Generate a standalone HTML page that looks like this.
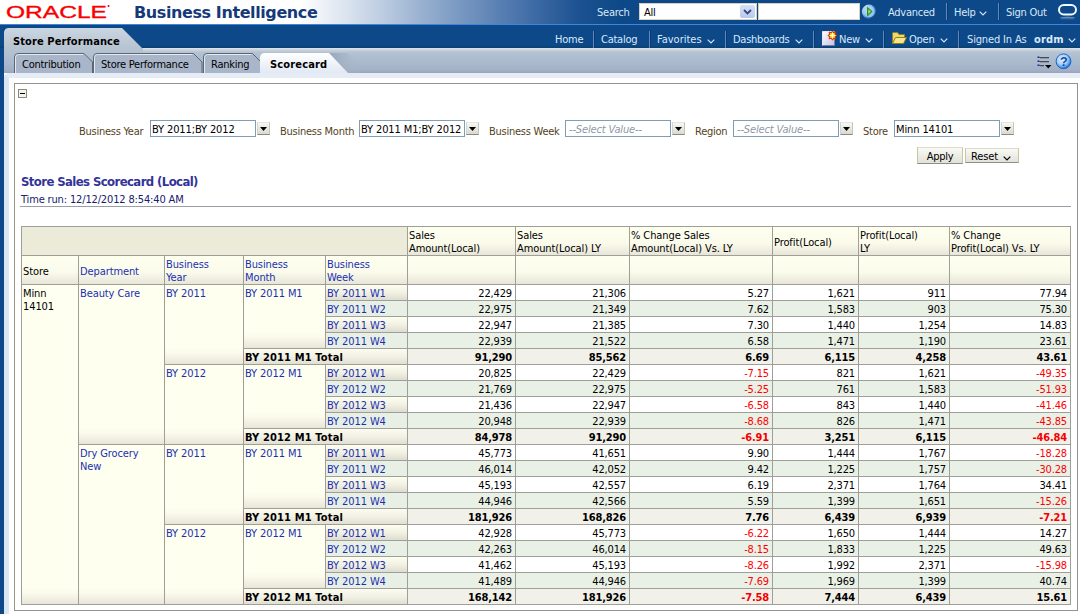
<!DOCTYPE html>
<html>
<head>
<meta charset="utf-8">
<title>Store Performance - Scorecard</title>
<style>
html,body{margin:0;padding:0}
body{width:1080px;height:614px;overflow:hidden;position:relative;background:#fff;font-family:"DejaVu Sans Condensed","Liberation Sans",sans-serif;font-size:11px;color:#000;line-height:13px}
.abs{position:absolute}
.t{position:absolute;white-space:nowrap;line-height:13px;letter-spacing:-0.25px;margin-top:1px}
#top{left:0;top:0;width:1080px;height:24px;background:linear-gradient(to right,#fff 0,#fff 300px,#d0dbea 360px,#89a5c9 440px,#4973ab 520px,#1b5190 580px,#0d4988 620px,#0d4988 100%)}
#line1{left:0;top:24px;width:1080px;height:1px;background:#3f86dc}
#bar2{left:0;top:25px;width:1080px;height:23px;background:#0d4988}
#tabrow{left:0;top:48px;width:1080px;height:25px;background:linear-gradient(to bottom,#dfe5ec 0,#d3dbe4 1px,#b5c4d3 4px,#afbfd1 8px,#a9b8cc 16px,#a3b0c6 22px,#98a4ba 25px)}
#lstrip{left:0;top:48px;width:4px;height:566px;background:#0d4988}
#content{left:4px;top:73px;width:1071px;height:536px;background:#fff;border-top-left-radius:5px;border-left:5px solid #dce6f3;border-top:5px solid #e6ecf5}
#panel{left:14px;top:83px;width:1062px;height:526px;border:1px solid #94948c;background:#fff}
.hl{color:#d9e8fa;margin-top:0 !important}
.sep{position:absolute;width:1px;height:17px;background:#5f88bb;box-shadow:1px 0 0 #0a3a70}
.chev{position:absolute;width:8px;height:5px}
/* prompts */
.pl{color:#544220}
.inp{position:absolute;top:120px;height:15px;width:104px;border:1px solid #7f9db9;background:#fff}
.inp span{position:absolute;left:1px;top:2px;white-space:nowrap;letter-spacing:-0.12px}
.inp i{position:absolute;left:3px;top:2px;white-space:nowrap;color:#8c99a8;letter-spacing:-0.15px}
.dd{position:absolute;top:122px;width:11px;height:11px;background:linear-gradient(#f7f7f3,#dadad2);border:1px solid;border-color:#e6e6e0 #c4c4bc #8a8a84 #d4d4cc}
.dd:after{content:"";position:absolute;left:2px;top:4px;width:7px;height:4px;background:#000;clip-path:polygon(0 0,100% 0,50% 100%)}
.btn{position:absolute;top:148px;height:13px;background:linear-gradient(#f9f9f5,#e2e2da);border:1px solid;border-color:#dcdcc8 #c9c6a0 #8e8e86 #c9c6a0;text-align:center;font-size:11px;line-height:13px;letter-spacing:-0.25px}
.btn span{position:relative;top:1px}
/* table */
#pv{position:absolute;left:21px;top:226px;border-collapse:separate;border-spacing:0;table-layout:fixed;width:1050px;border-right:1px solid #9ea098;border-bottom:1px solid #9ea098;letter-spacing:-0.1px}
#pv td{border-left:1px solid #9ea098;border-top:1px solid #9ea098;padding:0 2px 0 1px;line-height:13px;height:15px;vertical-align:top;overflow:hidden;white-space:nowrap;box-sizing:border-box}
#pv tr.h1 td,#pv tr.h2 td{height:29px;vertical-align:middle;padding:2px 2px 0 1px}
#pv td.blank{background:#ecebd9}
#pv td.ch{background:linear-gradient(to bottom,#fffff0 0,#fbfbec 16px,#e7e6d8 100%)}
#pv td.rh{background:linear-gradient(to top,#e7e6d9 0,#f2f1e4 6px,#fbfbee 12px,#fffff0 16px);color:#1a30b0;padding-top:2px}
#pv td.lk{color:#1a30b0}
#pv td.blk{color:#000}
#pv td.wk{background:linear-gradient(to bottom,#fdfdf0 0,#f1f0e3 8px,#dddcd0 100%);color:#1a30b0;height:16px;padding-top:2px}
#pv td.wk.alt{background:#e8f0e6}
#pv td.d{text-align:right;background:#fff;height:16px;padding-top:2px;padding-right:3px;letter-spacing:-0.15px}
#pv td.d.alt{background:#e9f1e7}
#pv td.tot{background:#f2f1e9;font-weight:bold;height:16px;padding-top:2px}
#pv td.tl{letter-spacing:0.15px;background:linear-gradient(to bottom,#fcfcf1 0,#f1f0e4 8px,#e0dfd2 100%)}
#pv td.neg{color:#ff0000}
#pv td.tot.neg{color:#f40000}
</style>
</head>
<body>
<div class="abs" id="top"></div>
<div class="abs" id="line1"></div>
<div class="abs" id="bar2"></div>
<div class="abs" style="left:0;top:45px;width:1080px;height:3px;background:linear-gradient(#0d4988,#09406f)"></div>
<div class="abs" id="tabrow"></div>
<div class="abs" id="lstrip"></div>
<div class="abs" id="content"></div>

<!-- ORACLE logo -->
<svg class="abs" style="left:0;top:0" width="130" height="24" viewBox="0 0 130 24"><text x="6" y="17.700" font-family="Liberation Sans, sans-serif" font-weight="normal" font-size="17.300" fill="#f80000" stroke="#f80000" stroke-width="0.350" textLength="101" lengthAdjust="spacingAndGlyphs">ORACLE</text><circle cx="108.5" cy="6" r="1" fill="#f80000"/></svg>
<div class="t" style="left:134px;top:1px;font-family:'DejaVu Sans','Liberation Sans',sans-serif;font-size:16px;font-weight:bold;line-height:22px;color:#15397a;letter-spacing:-0.4px">Business Intelligence</div>

<!-- search row -->
<div class="t hl" style="left:597px;top:6px">Search</div>
<div class="abs" style="left:639px;top:3px;width:116px;height:15px;background:#fff;border:1px solid #d6d2c2"></div>
<div class="t" style="left:644px;top:5px">All</div>
<div class="abs" style="left:740px;top:5px;width:15px;height:13px;background:linear-gradient(#d6e0f8,#b9c8ee);border-radius:2px"></div>
<svg class="abs" style="left:743px;top:9px" width="9" height="6" viewBox="0 0 9 6"><path d="M1 1 L4.5 4.5 L8 1" fill="none" stroke="#3a4a78" stroke-width="1.8"/></svg>
<div class="abs" style="left:758px;top:3px;width:100px;height:15px;background:#fff;border:1px solid #d6d2c2"></div>
<svg class="abs" style="left:861px;top:4px" width="16" height="16" viewBox="0 0 16 16"><defs><radialGradient id="gb" cx=".4" cy=".35" r=".7"><stop offset="0" stop-color="#b8e0fc"/><stop offset="1" stop-color="#78bcf4"/></radialGradient><linearGradient id="gs" x1="0" y1="0" x2="1" y2="1"><stop offset="0" stop-color="#e8f6ff"/><stop offset=".5" stop-color="#5a9ce0"/><stop offset="1" stop-color="#08287c"/></linearGradient></defs><circle cx="8" cy="7.700" r="6.500" fill="url(#gb)" stroke="url(#gs)" stroke-width="1.300"/><path d="M6.500 3.400 L11.200 7.600 L6.500 11.800 Z" fill="#5cb424" stroke="#34820e" stroke-width=".9" stroke-linejoin="round"/><path d="M7.500 5.900 L9.400 7.600 L7.500 9.300 Z" fill="#b4e494"/></svg>
<div class="t hl" style="left:888px;top:6px">Advanced</div>
<div class="sep" style="left:946px;top:3px"></div>
<div class="t hl" style="left:954px;top:6px">Help</div>
<svg class="chev" style="left:979px;top:11px" viewBox="0 0 8 5"><path d="M.7 .7 L4 4 L7.3 .7" fill="none" stroke="#d9e8fa" stroke-width="1.15"/></svg>
<div class="sep" style="left:998px;top:3px"></div>
<div class="t hl" style="left:1006px;top:6px">Sign Out</div>
<svg class="abs" style="left:1056px;top:2px" width="24" height="22" viewBox="0 0 24 22"><defs><linearGradient id="rf" x1="0" y1="0" x2="0" y2="1"><stop offset="0" stop-color="#9db9dc" stop-opacity=".9"/><stop offset="1" stop-color="#3b6ba8" stop-opacity="0"/></linearGradient></defs><rect x="3" y="3" width="17" height="9.500" rx="4.750" ry="4.750" fill="none" stroke="#f2f7fd" stroke-width="2"/><path d="M4 15.500 Q11.500 13.800 19 15.500 L17 18.500 Q11.500 17.500 6 18.500 Z" fill="url(#rf)"/></svg>

<!-- menu row -->
<div class="t hl" style="left:555px;top:33px">Home</div>
<div class="sep" style="left:593px;top:31px"></div>
<div class="t hl" style="left:601px;top:33px">Catalog</div>
<div class="sep" style="left:649px;top:31px"></div>
<div class="t hl" style="left:657px;top:33px;letter-spacing:0">Favorites</div>
<svg class="chev" style="left:707px;top:38.5px" viewBox="0 0 8 5"><path d="M.7 .7 L4 4 L7.3 .7" fill="none" stroke="#d9e8fa" stroke-width="1.15"/></svg>
<div class="sep" style="left:725px;top:31px"></div>
<div class="t hl" style="left:733px;top:33px">Dashboards</div>
<svg class="chev" style="left:795px;top:38.5px" viewBox="0 0 8 5"><path d="M.7 .7 L4 4 L7.3 .7" fill="none" stroke="#d9e8fa" stroke-width="1.15"/></svg>
<div class="sep" style="left:813px;top:31px"></div>
<svg class="abs" style="left:821px;top:30px" width="18" height="18" viewBox="0 0 18 18"><defs><linearGradient id="pg" x1="0" y1="0" x2="1" y2="1"><stop offset="0" stop-color="#ffffff"/><stop offset="1" stop-color="#c4c0e6"/></linearGradient></defs><path d="M1.500 1.500 H13.500 V15.500 H1.500 Z" fill="url(#pg)" stroke="#7c78ac" stroke-width="1"/><path d="M1.500 15.500 V1.500 H13" fill="none" stroke="#e8e6f6" stroke-width="1"/><path d="M11.500 0.800 L12.700 3 L15 2 L14 4.300 L16.200 5.500 L14 6.700 L15 9 L12.700 8 L11.500 10.200 L10.300 8 L8 9 L9 6.700 L6.800 5.500 L9 4.300 L8 2 L10.300 3 Z" fill="#ffdf20" stroke="#c43408" stroke-width="1"/><path d="M11.500 3 V8 M9 5.500 H14" stroke="#fffbe0" stroke-width="1.200"/></svg>
<div class="t hl" style="left:839px;top:33px">New</div>
<svg class="chev" style="left:865px;top:38px" viewBox="0 0 8 5"><path d="M.7 .7 L4 4 L7.3 .7" fill="none" stroke="#d9e8fa" stroke-width="1.15"/></svg>
<div class="sep" style="left:883px;top:31px"></div>
<svg class="abs" style="left:890px;top:30px" width="18" height="16" viewBox="0 0 18 16"><path d="M2.500 13.500 V3.500 Q2.500 2.500 3.500 2.500 H7.500 L9 4.500 H14.500 V7" fill="#ecd870" stroke="#94801c" stroke-width="1"/><path d="M2.500 13.500 L5.500 7.500 H16.500 L13.500 13.500 Z" fill="#f4e68c" stroke="#94801c" stroke-width="1"/></svg>
<div class="t hl" style="left:909px;top:33px">Open</div>
<svg class="chev" style="left:940px;top:38px" viewBox="0 0 8 5"><path d="M.7 .7 L4 4 L7.3 .7" fill="none" stroke="#d9e8fa" stroke-width="1.15"/></svg>
<div class="sep" style="left:958px;top:31px"></div>
<div class="t hl" style="left:967px;top:33px;letter-spacing:-0.15px">Signed In As</div>
<div class="t hl" style="left:1034px;top:33px;font-weight:bold;letter-spacing:0.2px">ordm</div>
<svg class="chev" style="left:1068px;top:38px" viewBox="0 0 8 5"><path d="M.7 .7 L4 4 L7.3 .7" fill="none" stroke="#d9e8fa" stroke-width="1.15"/></svg>

<!-- dashboard tab + page tabs -->
<svg class="abs" style="left:0;top:25px" width="400" height="50" viewBox="0 0 400 50">
<defs>
<linearGradient id="g1" x1="0" y1="0" x2="0" y2="1"><stop offset="0" stop-color="#cad6e0"/><stop offset="1" stop-color="#b6c3d0"/></linearGradient>
<linearGradient id="g1b" x1="0" y1="0" x2="0" y2="1"><stop offset="0" stop-color="#b7c4d1"/><stop offset="1" stop-color="#b2c1d2"/></linearGradient>
<linearGradient id="g2" x1="0" y1="0" x2="0" y2="1"><stop offset="0" stop-color="#ffffff"/><stop offset="1" stop-color="#e2e9f3"/></linearGradient>
<linearGradient id="g3" x1="0" y1="0" x2="1" y2="0"><stop offset="0" stop-color="#98a5ba"/><stop offset="1" stop-color="#aebccd" stop-opacity="0"/></linearGradient>
</defs>
<path d="M4 24 V8 Q4 3 9 3 H122 L142 23 V24 Z" fill="url(#g1)"/><rect x="4" y="23" width="139" height="5" fill="url(#g1b)"/>
<!-- inactive tabs -->
<g fill="#a9b6c9" stroke="#5d6675" stroke-width="1">
<path d="M14.500 48 V32 Q14.500 28.500 18 28.500 H84 L92.500 37 V48"/>
<path d="M93.500 48 V32 Q93.500 28.500 97 28.500 H193.500 L202 37 V48"/>
<path d="M203.500 48 V32 Q203.500 28.500 207 28.500 H252.500 L261 37 V48"/>
</g>
<g fill="none" stroke="#e4eaf2" stroke-width="1">
<path d="M15.500 48 V32.500 Q15.500 29.500 18.500 29.500 H83"/>
<path d="M94.500 48 V32.500 Q94.500 29.500 97.500 29.500 H192.500"/>
<path d="M204.500 48 V32.500 Q204.500 29.500 207.500 29.500 H251.500"/>
</g>
<path d="M329 28 L348 48 H364 L348 28 Z" fill="url(#g3)"/>
<path d="M260 48 V33 Q260 28 265 28 H329 L348 48 Z" fill="url(#g2)"/>
</svg>
<div class="t" style="left:13px;top:34px;font-weight:bold;letter-spacing:0.1px">Store Performance</div>
<div class="t" style="left:22px;top:57px">Contribution</div>
<div class="t" style="left:101px;top:57px">Store Performance</div>
<div class="t" style="left:211px;top:57px">Ranking</div>
<div class="t" style="left:270px;top:57px;font-weight:bold;letter-spacing:0.15px">Scorecard</div>

<!-- right icons -->
<svg class="abs" style="left:1034px;top:53px" width="18" height="18" viewBox="0 0 18 18"><g fill="#4a4a54"><rect x="5.500" y="4" width="9.500" height="1"/><rect x="5.500" y="8" width="9.500" height="1"/><rect x="5.500" y="12" width="4.500" height="1"/></g><g fill="#9299a4"><rect x="6" y="5" width="9" height="1"/><rect x="6" y="9" width="9" height="1"/><rect x="6" y="13" width="4" height="1"/></g><g fill="#2a2a80"><rect x="3.500" y="3.500" width="2" height="1.500"/><rect x="3.500" y="7.500" width="2" height="1.500"/><rect x="3.500" y="11.500" width="2" height="1.500"/></g><path d="M11 12 H17.500 L14.250 15.500 Z" fill="#000"/></svg>
<svg class="abs" style="left:1055px;top:53px" width="18" height="18" viewBox="0 0 18 18"><defs><radialGradient id="hg" cx=".42" cy=".38" r=".62"><stop offset="0" stop-color="#e4f3fd"/><stop offset=".55" stop-color="#a6d4f8"/><stop offset=".85" stop-color="#4a98ea"/><stop offset="1" stop-color="#1f62c6"/></radialGradient></defs><circle cx="8.500" cy="8.300" r="7.400" fill="url(#hg)" stroke="#2464c4" stroke-width="1"/><text x="8.700" y="12.700" text-anchor="middle" font-family="Liberation Sans, sans-serif" font-weight="bold" font-size="12.500" fill="#1746a8">?</text></svg>

<div class="abs" id="panel"></div>
<!-- collapse icon -->
<div class="abs" style="left:18px;top:89px;width:7px;height:7px;border:1px solid #8a8a80;background:#f4f4ec"></div>
<div class="abs" style="left:20px;top:93px;width:5px;height:1px;background:#000"></div>

<!-- prompts -->
<div class="t pl" style="left:79px;top:124px">Business Year</div>
<div class="inp" style="left:150px"><span>BY 2011;BY 2012</span></div><div class="dd" style="left:257px"></div>
<div class="t pl" style="left:280px;top:124px">Business Month</div>
<div class="inp" style="left:359px"><span>BY 2011 M1;BY 2012</span></div><div class="dd" style="left:466px"></div>
<div class="t pl" style="left:489px;top:124px">Business Week</div>
<div class="inp" style="left:565px"><i>--Select Value--</i></div><div class="dd" style="left:672px"></div>
<div class="t pl" style="left:695px;top:124px">Region</div>
<div class="inp" style="left:733px"><i>--Select Value--</i></div><div class="dd" style="left:840px"></div>
<div class="t pl" style="left:863px;top:124px">Store</div>
<div class="inp" style="left:894px"><span>Minn 14101</span></div><div class="dd" style="left:1001px"></div>
<div class="btn" style="left:917px;width:44px;top:147px;height:15px;line-height:15px"><span>Apply</span></div>
<div class="btn" style="left:965px;width:52px;text-align:left"><span style="margin-left:5px;letter-spacing:-0.1px">Reset</span><svg class="chev" style="left:37px;top:7px" viewBox="0 0 8 5"><path d="M.7 .7 L4 4 L7.3 .7" fill="none" stroke="#000" stroke-width="1.2"/></svg></div>

<!-- title -->
<div class="t" style="left:21px;top:173px;font-size:13px;font-weight:bold;color:#333399;line-height:16px;letter-spacing:-0.6px">Store Sales Scorecard (Local)</div>
<div class="t" style="left:21px;top:192px;color:#17206f;letter-spacing:-0.15px">Time run: 12/12/2012 8:54:40 AM</div>
<div class="abs" style="left:20px;top:206px;width:1051px;height:1px;background:#9a9ea6"></div>

<table id="pv" cellspacing="0" cellpadding="0">
<colgroup><col style="width:57px"><col style="width:86px"><col style="width:79px"><col style="width:82px"><col style="width:82px"><col style="width:108px"><col style="width:114px"><col style="width:143px"><col style="width:86px"><col style="width:91px"><col style="width:121px"></colgroup>
<tr class="h1"><td class="blank" colspan="5"></td><td class="ch">Sales<br>Amount(Local)</td><td class="ch">Sales<br>Amount(Local) LY</td><td class="ch">% Change Sales<br>Amount(Local) Vs. LY</td><td class="ch">Profit(Local)</td><td class="ch">Profit(Local)<br>LY</td><td class="ch">% Change<br>Profit(Local) Vs. LY</td></tr>
<tr class="h2"><td class="ch blk">Store</td><td class="ch lk">Department</td><td class="ch lk">Business<br>Year</td><td class="ch lk">Business<br>Month</td><td class="ch lk">Business<br>Week</td><td class="ch"></td><td class="ch"></td><td class="ch"></td><td class="ch"></td><td class="ch"></td><td class="ch"></td></tr>
<tr><td class="rh blk" rowspan="20">Minn<br>14101</td><td class="rh" rowspan="10">Beauty Care</td><td class="rh" rowspan="5">BY 2011</td><td class="rh" rowspan="4">BY 2011 M1</td><td class="wk">BY 2011 W1</td><td class="d">22,429</td><td class="d">21,306</td><td class="d">5.27</td><td class="d">1,621</td><td class="d">911</td><td class="d">77.94</td></tr>
<tr><td class="wk alt">BY 2011 W2</td><td class="d alt">22,975</td><td class="d alt">21,349</td><td class="d alt">7.62</td><td class="d alt">1,583</td><td class="d alt">903</td><td class="d alt">75.30</td></tr>
<tr><td class="wk">BY 2011 W3</td><td class="d">22,947</td><td class="d">21,385</td><td class="d">7.30</td><td class="d">1,440</td><td class="d">1,254</td><td class="d">14.83</td></tr>
<tr><td class="wk alt">BY 2011 W4</td><td class="d alt">22,939</td><td class="d alt">21,522</td><td class="d alt">6.58</td><td class="d alt">1,471</td><td class="d alt">1,190</td><td class="d alt">23.61</td></tr>
<tr><td class="tot tl" colspan="2">BY 2011 M1 Total</td><td class="d tot">91,290</td><td class="d tot">85,562</td><td class="d tot">6.69</td><td class="d tot">6,115</td><td class="d tot">4,258</td><td class="d tot">43.61</td></tr>
<tr><td class="rh" rowspan="5">BY 2012</td><td class="rh" rowspan="4">BY 2012 M1</td><td class="wk">BY 2012 W1</td><td class="d">20,825</td><td class="d">22,429</td><td class="d neg">-7.15</td><td class="d">821</td><td class="d">1,621</td><td class="d neg">-49.35</td></tr>
<tr><td class="wk alt">BY 2012 W2</td><td class="d alt">21,769</td><td class="d alt">22,975</td><td class="d alt neg">-5.25</td><td class="d alt">761</td><td class="d alt">1,583</td><td class="d alt neg">-51.93</td></tr>
<tr><td class="wk">BY 2012 W3</td><td class="d">21,436</td><td class="d">22,947</td><td class="d neg">-6.58</td><td class="d">843</td><td class="d">1,440</td><td class="d neg">-41.46</td></tr>
<tr><td class="wk alt">BY 2012 W4</td><td class="d alt">20,948</td><td class="d alt">22,939</td><td class="d alt neg">-8.68</td><td class="d alt">826</td><td class="d alt">1,471</td><td class="d alt neg">-43.85</td></tr>
<tr><td class="tot tl" colspan="2">BY 2012 M1 Total</td><td class="d tot">84,978</td><td class="d tot">91,290</td><td class="d tot neg">-6.91</td><td class="d tot">3,251</td><td class="d tot">6,115</td><td class="d tot neg">-46.84</td></tr>
<tr><td class="rh" rowspan="10">Dry Grocery<br>New</td><td class="rh" rowspan="5">BY 2011</td><td class="rh" rowspan="4">BY 2011 M1</td><td class="wk">BY 2011 W1</td><td class="d">45,773</td><td class="d">41,651</td><td class="d">9.90</td><td class="d">1,444</td><td class="d">1,767</td><td class="d neg">-18.28</td></tr>
<tr><td class="wk alt">BY 2011 W2</td><td class="d alt">46,014</td><td class="d alt">42,052</td><td class="d alt">9.42</td><td class="d alt">1,225</td><td class="d alt">1,757</td><td class="d alt neg">-30.28</td></tr>
<tr><td class="wk">BY 2011 W3</td><td class="d">45,193</td><td class="d">42,557</td><td class="d">6.19</td><td class="d">2,371</td><td class="d">1,764</td><td class="d">34.41</td></tr>
<tr><td class="wk alt">BY 2011 W4</td><td class="d alt">44,946</td><td class="d alt">42,566</td><td class="d alt">5.59</td><td class="d alt">1,399</td><td class="d alt">1,651</td><td class="d alt neg">-15.26</td></tr>
<tr><td class="tot tl" colspan="2">BY 2011 M1 Total</td><td class="d tot">181,926</td><td class="d tot">168,826</td><td class="d tot">7.76</td><td class="d tot">6,439</td><td class="d tot">6,939</td><td class="d tot neg">-7.21</td></tr>
<tr><td class="rh" rowspan="5">BY 2012</td><td class="rh" rowspan="4">BY 2012 M1</td><td class="wk">BY 2012 W1</td><td class="d">42,928</td><td class="d">45,773</td><td class="d neg">-6.22</td><td class="d">1,650</td><td class="d">1,444</td><td class="d">14.27</td></tr>
<tr><td class="wk alt">BY 2012 W2</td><td class="d alt">42,263</td><td class="d alt">46,014</td><td class="d alt neg">-8.15</td><td class="d alt">1,833</td><td class="d alt">1,225</td><td class="d alt">49.63</td></tr>
<tr><td class="wk">BY 2012 W3</td><td class="d">41,462</td><td class="d">45,193</td><td class="d neg">-8.26</td><td class="d">1,992</td><td class="d">2,371</td><td class="d neg">-15.98</td></tr>
<tr><td class="wk alt">BY 2012 W4</td><td class="d alt">41,489</td><td class="d alt">44,946</td><td class="d alt neg">-7.69</td><td class="d alt">1,969</td><td class="d alt">1,399</td><td class="d alt">40.74</td></tr>
<tr><td class="tot tl" colspan="2">BY 2012 M1 Total</td><td class="d tot">168,142</td><td class="d tot">181,926</td><td class="d tot neg">-7.58</td><td class="d tot">7,444</td><td class="d tot">6,439</td><td class="d tot">15.61</td></tr>
</table>

</body>
</html>
